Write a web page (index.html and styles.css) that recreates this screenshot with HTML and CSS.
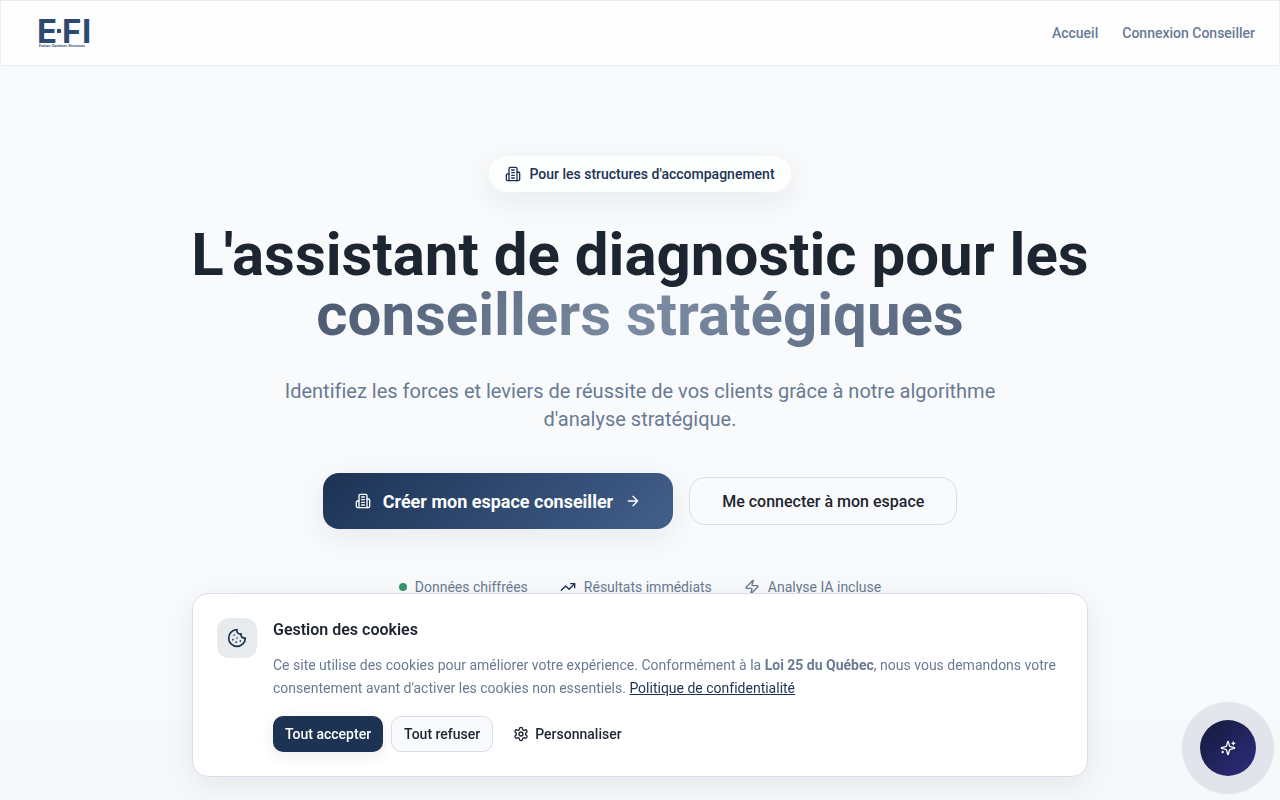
FILE: index.html
```html
<!DOCTYPE html>
<html lang="fr">
<head>
<meta charset="utf-8">
<meta name="viewport" content="width=device-width, initial-scale=1">
<title>E·FI</title>
<link rel="stylesheet" href="styles.css">
</head>
<body>
<svg class="sprite" aria-hidden="true">
  <symbol id="building" viewBox="0 0 24 24">
    <path d="M6 22V4a2 2 0 0 1 2-2h8a2 2 0 0 1 2 2v18Z"/>
    <path d="M6 12H4a2 2 0 0 0-2 2v6a2 2 0 0 0 2 2h2"/>
    <path d="M18 9h2a2 2 0 0 1 2 2v9a2 2 0 0 1-2 2h-2"/>
    <path d="M10 6h4M10 10h4M10 14h4M10 18h4"/>
  </symbol>
</svg>

<header class="topbar">
  <a class="logo" href="#" aria-label="E·FI, accueil">
    <svg class="logo-mark" width="52" height="30" viewBox="0 0 52 30">
      <g class="logo-letters">
        <text x="-2" y="25">E</text>
        <text x="23" y="25">F</text>
        <text x="43" y="25">I</text>
      </g>
      <rect x="18" y="11" width="4" height="4"/>
      <text class="logo-tagline" x="0" y="29">Evaluez. Optimisez. Réussissez.</text>
    </svg>
  </a>
  <nav class="nav">
    <a href="#">Accueil</a>
    <a href="#">Connexion Conseiller</a>
  </nav>
</header>

<main>
  <section class="hero">
    <div class="pill">
      <svg class="icon"><use href="#building"/></svg>
      <span>Pour les structures d'accompagnement</span>
    </div>
    <h1 class="title">L'assistant de diagnostic pour les<br><span class="title-accent">conseillers stratégiques</span></h1>
    <p class="subtitle">Identifiez les forces et leviers de réussite de vos clients grâce à notre algorithme d'analyse stratégique.</p>
    <div class="actions">
      <button class="btn btn-primary" type="button">
        <svg class="icon"><use href="#building"/></svg>
        <span>Créer mon espace conseiller</span>
        <svg class="icon" viewBox="0 0 24 24"><path d="M5 12h14M12 5l7 7-7 7"/></svg>
      </button>
      <button class="btn btn-outline" type="button">Me connecter à mon espace</button>
    </div>
    <ul class="features">
      <li><span class="dot"></span>Données chiffrées</li>
      <li><svg class="icon icon-navy" viewBox="0 0 24 24"><path d="M22 7l-8.5 8.5-5-5L2 17"/><path d="M16 7h6v6"/></svg>Résultats immédiats</li>
      <li><svg class="icon" viewBox="0 0 24 24"><path d="M4 14a1 1 0 0 1-.78-1.63l9.9-10.2a.5.5 0 0 1 .86.46l-1.92 6.02A1 1 0 0 0 13 10h7a1 1 0 0 1 .78 1.63l-9.9 10.2a.5.5 0 0 1-.86-.46l1.92-6.02A1 1 0 0 0 11 14z"/></svg>Analyse IA incluse</li>
    </ul>
  </section>
  <section class="next"></section>
</main>

<div class="cookie-wrap">
  <section class="cookie" aria-labelledby="cookie-title">
    <div class="cookie-icon">
      <svg class="icon icon-lg" viewBox="0 0 24 24"><path d="M12 2a10 10 0 1 0 10 10 4 4 0 0 1-5-5 4 4 0 0 1-5-5"/><path d="M8.500 8.500v.01M16 15.500v.01M12 12v.01M11 17v.01M7 14v.01"/></svg>
    </div>
    <div class="cookie-body">
      <h2 class="cookie-title" id="cookie-title">Gestion des cookies</h2>
      <p class="cookie-text">Ce site utilise des cookies pour améliorer votre expérience. Conformément à la <strong>Loi 25 du Québec</strong>, nous vous demandons votre consentement avant d'activer les cookies non essentiels. <a href="#">Politique de confidentialité</a></p>
      <div class="cookie-actions">
        <button class="small small-primary" type="button">Tout accepter</button>
        <button class="small small-outline" type="button">Tout refuser</button>
        <button class="small small-ghost" type="button">
          <svg class="icon" viewBox="0 0 24 24"><path d="M12.220 2h-.44a2 2 0 0 0-2 2v.18a2 2 0 0 1-1 1.730l-.43.25a2 2 0 0 1-2 0l-.15-.08a2 2 0 0 0-2.730.73l-.22.38a2 2 0 0 0 .73 2.730l.15.1a2 2 0 0 1 1 1.720v.51a2 2 0 0 1-1 1.740l-.15.09a2 2 0 0 0-.73 2.730l.22.38a2 2 0 0 0 2.730.73l.15-.08a2 2 0 0 1 2 0l.43.25a2 2 0 0 1 1 1.730V20a2 2 0 0 0 2 2h.44a2 2 0 0 0 2-2v-.18a2 2 0 0 1 1-1.730l.43-.25a2 2 0 0 1 2 0l.15.08a2 2 0 0 0 2.730-.73l.22-.39a2 2 0 0 0-.73-2.730l-.15-.08a2 2 0 0 1-1-1.740v-.5a2 2 0 0 1 1-1.740l.15-.09a2 2 0 0 0 .73-2.730l-.22-.38a2 2 0 0 0-2.730-.73l-.15.08a2 2 0 0 1-2 0l-.43-.25a2 2 0 0 1-1-1.730V4a2 2 0 0 0-2-2z"/><circle cx="12" cy="12" r="3"/></svg>
          <span>Personnaliser</span>
        </button>
      </div>
    </div>
  </section>
</div>

<button class="assistant" type="button" aria-label="Assistant IA">
  <svg class="icon" viewBox="0 0 24 24"><path d="M9.940 15.500A2 2 0 0 0 8.500 14.060l-6.140-1.580a.5.5 0 0 1 0-.96L8.500 9.940A2 2 0 0 0 9.940 8.500l1.580-6.140a.5.5 0 0 1 .96 0L14.060 8.500A2 2 0 0 0 15.500 9.940l6.140 1.580a.5.5 0 0 1 0 .96L15.500 14.060a2 2 0 0 0-1.440 1.440l-1.580 6.140a.5.5 0 0 1-.96 0z"/><path d="M20 3v4M22 5h-4M4 17v2M5 18H3"/></svg>
</button>
</body>
</html>
```

FILE: styles.css
```css
* { box-sizing: border-box; }

body {
  margin: 0;
  font-family: Roboto, "Liberation Sans", sans-serif;
  text-rendering: optimizeSpeed;
  color: #1d2530;
  background: #f9fafc;
}

h1, h2, p, ul { margin: 0; padding: 0; }
button { font-family: inherit; color: inherit; text-rendering: inherit; cursor: pointer; }

.sprite { position: absolute; width: 0; height: 0; }

.icon {
  width: 16px;
  height: 16px;
  flex: none;
  fill: none;
  stroke: currentColor;
  stroke-width: 2;
  stroke-linecap: round;
  stroke-linejoin: round;
}
.icon-lg { width: 20px; height: 20px; }
.icon-navy { color: #1c3354; }

.topbar {
  position: fixed;
  inset: 0 0 auto;
  z-index: 10;
  display: flex;
  align-items: center;
  justify-content: space-between;
  height: 66px;
  padding: 0 24px 0 38px;
  background: #fefefe;
  border: 1px solid #e9ecf2;
}
.logo { display: flex; }
.logo-mark { overflow: visible; fill: #2c4a70; }
.logo-letters { font: 700 33px Inter, sans-serif; }
.logo-tagline { font: 700 3px Inter, sans-serif; }
.nav { display: flex; gap: 24px; }
.nav a {
  font-size: 14px;
  line-height: 20px;
  font-weight: 500;
  color: #697a94;
  text-decoration: none;
}

.hero {
  display: flex;
  flex-direction: column;
  align-items: center;
  min-height: 90vh;
  padding: 156px 24px 48px;
  text-align: center;
}
.pill {
  display: flex;
  align-items: center;
  gap: 8px;
  padding: 8px 16px;
  border-radius: 18px;
  background: #fdfefe;
  color: #1c3354;
  font-size: 14px;
  line-height: 20px;
  font-weight: 500;
  box-shadow: 0 8px 32px rgba(20, 25, 35, .08);
}
.title {
  margin-top: 33px;
  font-size: 60px;
  line-height: 60px;
  font-weight: 700;
}
.title-accent {
  padding-bottom: 4px;
  background: linear-gradient(135deg, #47566c, #7b8ba1 50%, #53627b);
  -webkit-background-clip: text;
  background-clip: text;
  color: transparent;
}
.subtitle {
  max-width: 768px;
  margin-top: 32px;
  font-size: 20px;
  line-height: 28px;
  color: #697a94;
}
.actions {
  display: flex;
  flex-wrap: wrap;
  align-items: center;
  justify-content: center;
  gap: 16px;
  margin-top: 40px;
}
.btn {
  display: flex;
  align-items: center;
  gap: 12px;
  padding: 0 32px;
  border-radius: 16px;
}
.btn-primary {
  height: 56px;
  border: 0;
  background: linear-gradient(135deg, #1c3354, #425f8b);
  color: #fff;
  font-size: 18px;
  font-weight: 700;
  box-shadow: 0 8px 32px rgba(20, 25, 35, .08);
}
.btn-outline {
  height: 48px;
  border: 1px solid #d7deea;
  background: #f9fafc;
  font-size: 16px;
  font-weight: 500;
}
.features {
  display: flex;
  flex-wrap: wrap;
  justify-content: center;
  gap: 32px;
  margin-top: 48px;
  list-style: none;
  font-size: 14px;
  line-height: 20px;
  color: #697a94;
}
.features li { display: flex; align-items: center; gap: 8px; }
.dot { width: 8px; height: 8px; border-radius: 50%; background: #37966f; }

.next { min-height: 10vh; background: #f7f8fa; }

.cookie-wrap {
  position: fixed;
  inset: auto 0 23px;
  z-index: 20;
  padding: 0 24px;
}
.cookie {
  display: flex;
  gap: 16px;
  max-width: 896px;
  margin: 0 auto;
  padding: 24px;
  border: 1px solid #d7deea;
  border-radius: 16px;
  background: #fff;
  box-shadow: 0 8px 32px rgba(20, 25, 35, .08);
}
.cookie-icon {
  display: flex;
  align-items: center;
  justify-content: center;
  flex: none;
  width: 40px;
  height: 40px;
  border-radius: 12px;
  background: #e8ebee;
  color: #1c3354;
}
.cookie-title { font-size: 16px; line-height: 24px; font-weight: 600; }
.cookie-text {
  margin-top: 12px;
  font-size: 14px;
  line-height: 23px;
  color: #697a94;
}
.cookie-text a { color: #1c3354; }
.cookie-actions { display: flex; flex-wrap: wrap; gap: 8px; margin-top: 16px; }
.small {
  display: flex;
  align-items: center;
  gap: 6px;
  height: 36px;
  padding: 0 12px;
  border: 0;
  border-radius: 10px;
  font-size: 14px;
  font-weight: 500;
}
.small-primary {
  background: #1c3354;
  color: #fff;
  box-shadow: 0 4px 16px rgba(20, 25, 35, .08);
}
.small-outline { border: 1px solid #d7deea; background: #f9fafc; }
.small-ghost { background: none; }

.assistant {
  position: fixed;
  right: 24px;
  bottom: 24px;
  z-index: 30;
  display: flex;
  align-items: center;
  justify-content: center;
  width: 56px;
  height: 56px;
  padding: 0;
  border: 0;
  border-radius: 50%;
  background: linear-gradient(135deg, #121a38, #302c80);
  color: #fff;
  box-shadow: 0 0 0 18px rgba(30, 45, 90, .08), 0 0 0 19px rgba(30, 41, 80, .02);
}
```
